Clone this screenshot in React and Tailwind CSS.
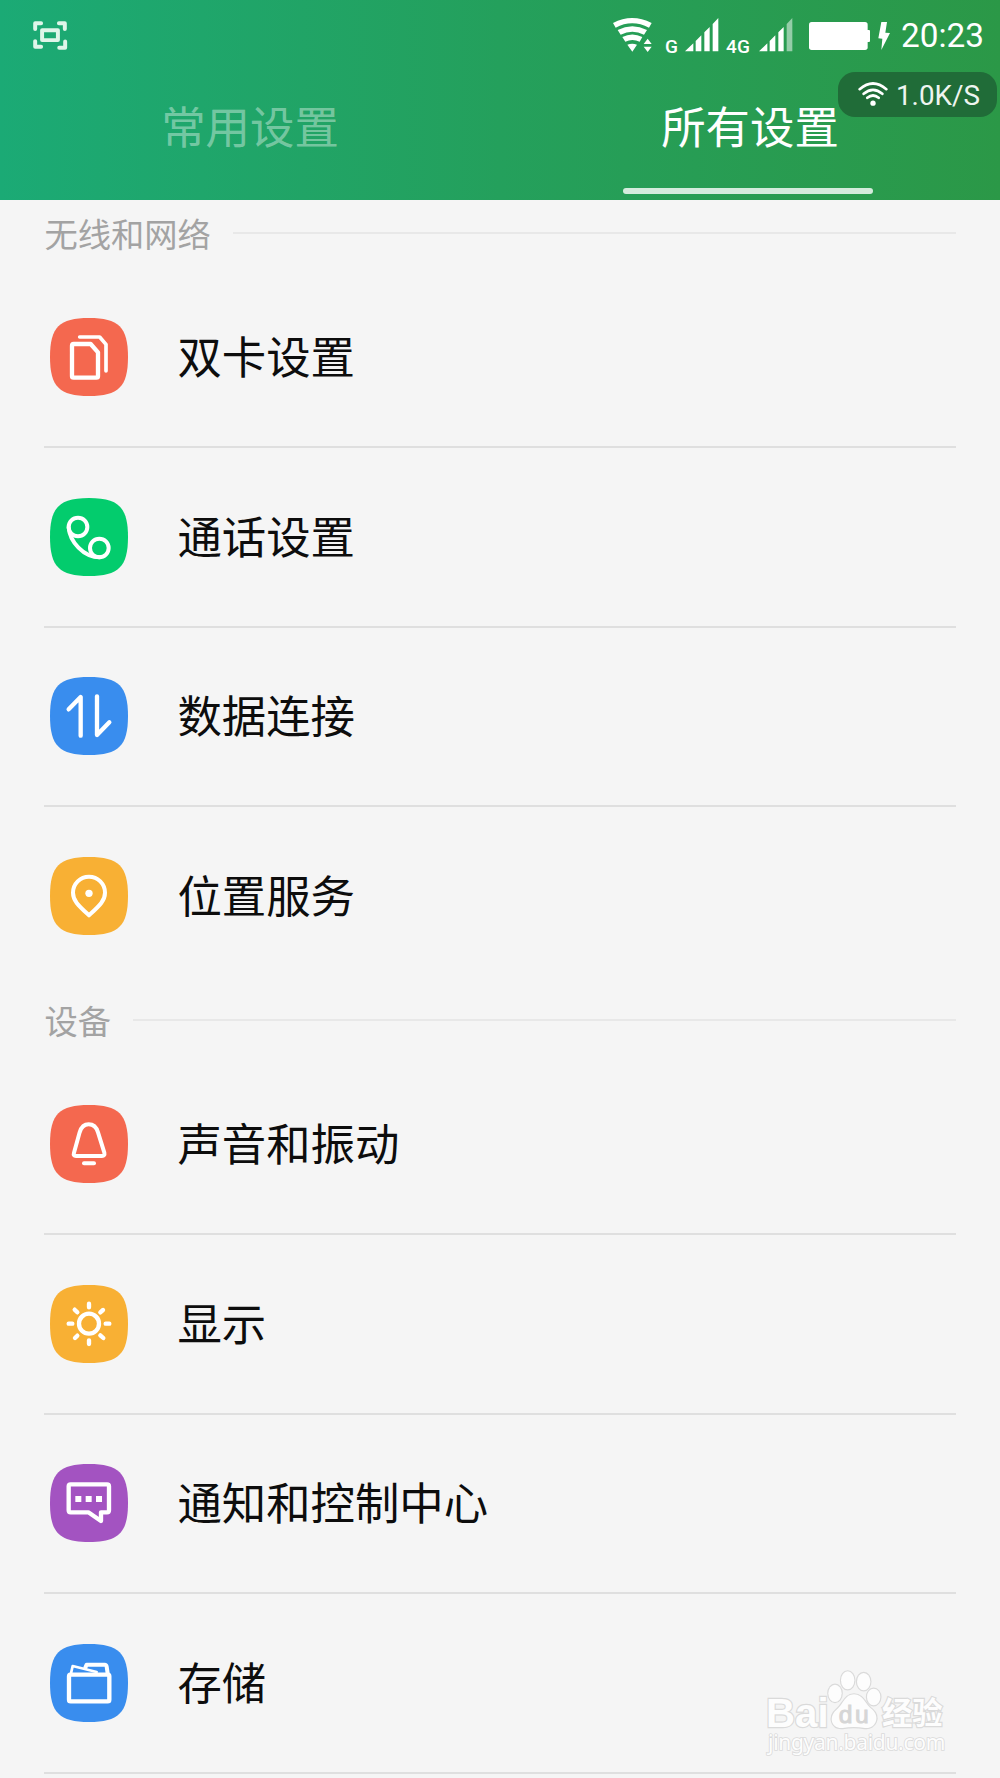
import React from 'react';

const SQUIRCLE = 'M117 0C206 0 234 28 234 117S206 234 117 234S0 206 0 117S28 0 117 0Z';

const sections = [
    {
        title: '无线和网络',
        items: [
            { label: '双卡设置', icon: 'sim', color: 'fill-[#f4684f]' },
            { label: '通话设置', icon: 'call', color: 'fill-[#03cc6d]' },
            { label: '数据连接', icon: 'data', color: 'fill-[#398dee]' },
            { label: '位置服务', icon: 'location', color: 'fill-[#f8b034]' },
        ],
    },
    {
        title: '设备',
        items: [
            { label: '声音和振动', icon: 'sound', color: 'fill-[#f4684f]' },
            { label: '显示', icon: 'display', color: 'fill-[#f8b034]' },
            { label: '通知和控制中心', icon: 'notice', color: 'fill-[#a353c1]' },
            { label: '存储', icon: 'storage', color: 'fill-[#398dee]' },
        ],
    },
];

const glyphs = {
    sim: (
        <>
            <path d="M89 57H149L168 79V159" strokeWidth="11" />
            <path d="M71 78H122L144 103V175Q144 179 139 179H71Q66 179 66 175V83Q66 78 71 78Z" strokeWidth="13" />
        </>
    ),
    call: (
        <>
            <circle cx="84" cy="87" r="28" />
            <circle cx="148" cy="150" r="28" />
            <path d="M56 88C59 130 100 178 150 178" />
        </>
    ),
    data: <path d="M56 97L92 60V176M141 58V174L178 136" strokeWidth="13" />,
    location: (
        <>
            <path d="M69 107A48 48 0 0 1 165 107C165 132 147 147 117 175C87 147 69 132 69 107Z" />
            <circle cx="117" cy="109" r="11" fill="white" stroke="none" />
        </>
    ),
    sound: (
        <>
            <path d="M116 58C100 58 93 69 89 82L72 143Q69 153 78 153H156Q165 153 163 143L144 82C140 69 133 58 116 58Z" />
            <path d="M102 175H132" />
        </>
    ),
    display: (
        <>
            <circle cx="117" cy="116" r="30" strokeWidth="13" />
            <path d="M117 56V67M117 166V177M56 116H67M167 116H178M74 74L82 82M151 82L159 75M75 159L82 152M151 151L160 159" strokeWidth="13" />
        </>
    ),
    notice: (
        <>
            <path d="M62 61H171Q177 61 177 67V139Q177 145 171 145H153V171L115 145H62Q56 145 56 139V67Q56 61 62 61Z" strokeWidth="13" />
            <path d="M76 96h18v18h-18zM107 96h18v18h-18zM138 96h18v18h-18z" fill="white" stroke="none" />
        </>
    ),
    storage: (
        <>
            <path d="M61 92H174Q178 92 178 97V167Q178 172 173 172H62Q57 172 57 167V97Q57 92 61 92Z" strokeWidth="13" />
            <path d="M106 71L110 62H164Q169 62 170 68L173 88" />
            <path d="M63 88L68 66L140 84" strokeWidth="8" />
        </>
    ),
};

function ItemIcon({ name, color }) {
    return (
        <svg viewBox="0 0 234 234" className="w-[78px] h-[78px] shrink-0">
            <path d={SQUIRCLE} className={color} />
            <g fill="none" stroke="white" strokeWidth="12" strokeLinecap="round" strokeLinejoin="round">
                {glyphs[name]}
            </g>
        </svg>
    );
}

function Signal({ weak }) {
    return (
        <svg viewBox="0 0 102 102" className="w-[34px] h-[34px]" fill="white">
            <path d="M0 100L25 76V100ZM32 69L49 52V100H32ZM58 43L74 27V100H58Z" />
            <path d="M83 18L100 0V100H83Z" opacity={weak ? 0.5 : 1} />
        </svg>
    );
}

function StatusBar() {
    return (
        <div className="h-[72px] flex items-start justify-between pl-[33px] pr-[16px]">
            <svg viewBox="0 0 105 88" className="w-[35px] h-[29px] mt-[21px]" fill="none" stroke="#dff5e9" strokeWidth="12" strokeLinecap="round" strokeLinejoin="round">
                <path d="M6 24V7H24M78 7H96V24M6 61V78H24M79 81H97V62" />
                <rect x="27" y="28" width="48" height="30" />
            </svg>
            <div className="flex items-start">
                <svg viewBox="0 0 117 102" className="w-[39px] h-[34px] mt-[18px]" fill="white">
                    <path d="M0 15Q57 -15 116 15L108 29Q57 3 8 29Z" />
                    <path d="M14 36Q58 14 102 36L93 50Q58 32 23 50Z" />
                    <path d="M28 57Q58 42 88 57L80 71Q58 61 37 71Z" />
                    <path d="M43 80Q58 74 72 80L58 101ZM104 62L116 78H92ZM92 86H116L104 102Z" />
                </svg>
                <span className="w-[18px] ml-[13px] mt-[37px] text-[19px] leading-[20px] font-medium">G</span>
                <span className="mt-[18px] ml-[2px]"><Signal /></span>
                <span className="w-[27px] ml-[7px] mt-[37px] text-[19px] leading-[20px] font-medium">4G</span>
                <span className="mt-[18px] ml-[6px]"><Signal weak /></span>
                <svg viewBox="0 0 246 84" className="w-[82px] h-[28px] mt-[22px] ml-[16px]" fill="white">
                    <rect width="176" height="84" rx="8" />
                    <rect x="170" y="24" width="13" height="36" rx="3" />
                    <path d="M217 0H234L229 32L243 33L217 84L220 50L208 49Z" />
                </svg>
                <span className="ml-[10px] mt-[16px] text-[33.3px] leading-[40px]">20:23</span>
            </div>
        </div>
    );
}

function SpeedBadge() {
    return (
        <div className="absolute top-[72px] right-[3px] w-[159px] h-[45px] rounded-[17px] bg-[#206c38] flex items-center pl-[20px]">
            <svg viewBox="0 0 90 74" className="w-[30px] h-[25px]" fill="none" stroke="white" strokeWidth="8" strokeLinecap="round">
                <path d="M5 21Q45 -13 85 21M17 35Q45 11 73 35M28 47Q45 33 62 47" />
                <circle cx="45" cy="63" r="8" fill="white" stroke="none" />
            </svg>
            <span className="ml-[8px] pt-[2px] text-[27.8px] leading-[40px] text-[#eef5f0]">1.0K/S</span>
        </div>
    );
}

function Header() {
    return (
        <header className="relative h-[200px] font-[Roboto,sans-serif] text-white bg-linear-to-r from-[#1baa75] via-[#24a05c] to-[#2b9847]">
            <StatusBar />
            <nav className="flex h-[128px] font-['Noto_Sans_CJK_SC',sans-serif] text-[44.4px] leading-[60px]">
                <div className="w-1/2 flex flex-col items-center pt-[23px] text-white/40">常用设置</div>
                <div className="w-1/2 flex flex-col items-center pt-[23px]">
                    所有设置
                    <span className="mt-[33px] mr-[4px] w-[250px] h-[6px] rounded-full bg-white/80" />
                </div>
            </nav>
            <SpeedBadge />
        </header>
    );
}

function SectionTitle({ title, first }) {
    return (
        <div className={`flex items-center shrink-0 ${first ? 'h-[68.4px] pb-[2px]' : 'h-[68.6px] pb-[2px]'}`}>
            <h2 className="text-[33.3px] leading-[40px] text-[#a3a3a3]">{title}</h2>
            <span className="ml-[22px] flex-1 h-[2px] bg-[#e8e8e8]" />
        </div>
    );
}

function Watermark() {
    return (
        <svg viewBox="0 0 750 384" className="absolute right-0 bottom-0 w-[250px] h-[128px]" fill="#fdfdfd" stroke="#dadada" strokeWidth="7" paintOrder="stroke">
            <text x="48" y="230" fontSize="121" textLength="188" lengthAdjust="spacingAndGlyphs" fontFamily="Liberation Sans, sans-serif" fontWeight="bold">Bai</text>
            <ellipse cx="255" cy="130" rx="20" ry="26" />
            <ellipse cx="293" cy="91" rx="20" ry="27" />
            <ellipse cx="341" cy="95" rx="20" ry="26" />
            <ellipse cx="371" cy="141" rx="20" ry="25" />
            <path d="M312 133C340 133 346 164 366 178C393 202 375 238 345 234C322 230 300 230 278 234C245 237 234 202 259 180C281 162 284 133 312 133Z" />
            <text x="266" y="218" fontSize="74" textLength="90" fontFamily="Liberation Sans, sans-serif" fill="#d6d6d6" stroke="#d6d6d6" strokeWidth="3">du</text>
            <text x="396" y="222" fontSize="91" fontWeight="bold" fontFamily="Noto Sans CJK SC, sans-serif">经验</text>
            <text x="54" y="300" fontSize="63" textLength="532" fontFamily="Noto Sans, sans-serif" strokeWidth="5">jingyan.baidu.com</text>
        </svg>
    );
}

export default function App() {
    return (
        <div className="relative w-[1000px] h-[1778px] overflow-hidden bg-[#f5f5f5] font-['Noto_Sans_CJK_SC',sans-serif]">
            <Header />
            <main className="px-[44.4px]">
                {sections.map((section, s) => (
                    <section key={section.title}>
                        <SectionTitle title={section.title} first={s === 0} />
                        {section.items.map((item, i) => (
                            <div
                                key={item.label}
                                className={`flex items-center h-[179.6px] pl-[5.6px] border-b-2 ${
                                    s === 0 && i === section.items.length - 1 ? 'border-transparent' : 'border-[#dfdfdf]'
                                }`}>
                                <ItemIcon name={item.icon} color={item.color} />
                                <span className="ml-[49.4px] pb-[4px] text-[44.4px] leading-[60px] text-[#0d0d0d]">{item.label}</span>
                            </div>
                        ))}
                    </section>
                ))}
            </main>
            <Watermark />
        </div>
    );
}
